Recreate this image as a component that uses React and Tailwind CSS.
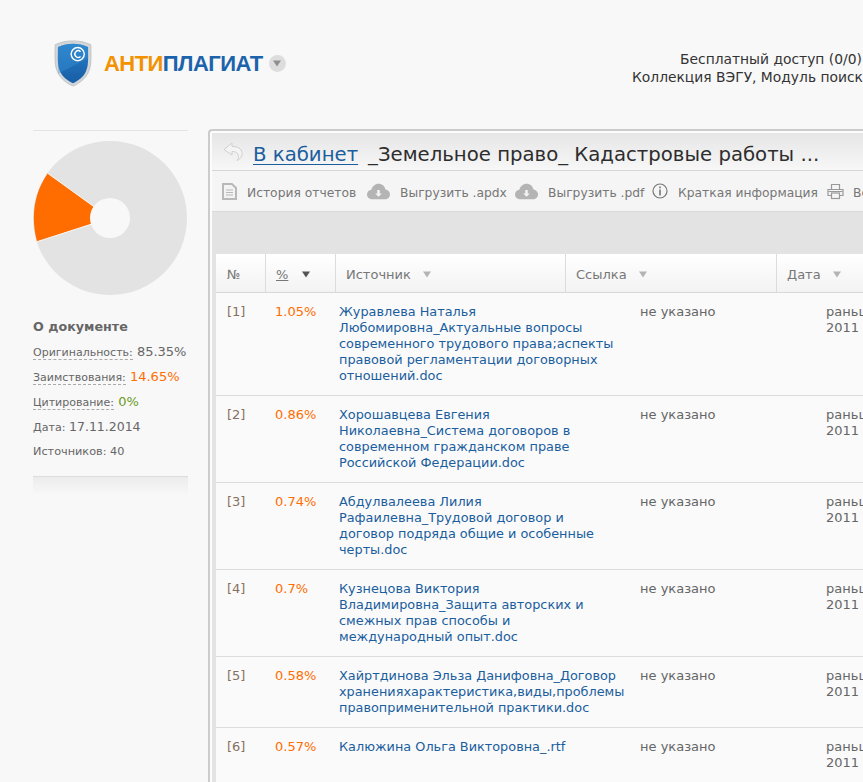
import React from "react";

function Caret({ dark, soft }) {
  return (
    <svg width="8" height="7" viewBox="0 0 8 7" className="shrink-0">
      <path d="M0 .5h8L4 6.500z" fill={dark ? "#555555" : soft ? "#8f8f8f" : "#b4b4b4"} />
    </svg>
  );
}

function Shield() {
  return (
    <svg width="38" height="47" viewBox="0 0 40 50" className="shrink-0">
      <defs>
        <linearGradient id="sh" x1="0" y1="0" x2="0" y2="1">
          <stop offset="0" stopColor="#2a80c8" />
          <stop offset="1" stopColor="#175da5" />
        </linearGradient>
      </defs>
      <path d="M1 5C8 2 13 1 20 1s12 1 19 4c0 14 1 22-3 30-3 6-9 11-16 14C13 46 7 41 4 35 0 27 1 19 1 5z" fill="#d3d6d8" stroke="#bfc3c5" strokeWidth="1" />
      <path d="M4 7.500C10 5 14 4 20 4s10 1 16 3.500c0 12 1 19-2.500 26.500C31 39.500 26 43 20 46 14 43 9 39.500 6.500 34 3 26.500 4 19.500 4 7.500z" fill="url(#sh)" />
      <path d="M36 7.500c0 5 .2 8-.2 12L4.300 36C3.800 26 4 18 4 7.500 10 5 14 4 20 4s10 1 16 3.500z" fill="#3b97dd" opacity="0.35" />
      <circle cx="25" cy="15" r="7" fill="none" stroke="#fff" strokeWidth="1.500" />
      <path d="M28 12.500a3.500 3.500 0 1 0 0 5" fill="none" stroke="#fff" strokeWidth="1.500" />
    </svg>
  );
}

function DocIcon() {
  return (
    <svg width="15" height="17" viewBox="0 0 15 17" className="shrink-0">
      <path d="M1 1h9l4 4v11H1z" fill="#f3f3f3" stroke="#b9b9b9" strokeWidth="2" />
      <path d="M4 7h7M4 9.500h7M4 12h7" stroke="#b9b9b9" strokeWidth="1" />
    </svg>
  );
}

function CloudIcon() {
  return (
    <svg width="23" height="17" viewBox="0 0 24 17" className="shrink-0">
      <path d="M6 16.500C2.500 16.500 0 14.500 0 11.500c0-2.500 2-4.500 4.500-4.800C5.500 3 8.500 .5 12 .5c3.800 0 6.500 2.500 7.300 6C22 7 24 9 24 11.500c0 3-2.500 5-5.500 5z" fill="#b4b4b4" />
      <path d="M10.700 7h2.600v3.500h2.200L12 14l-3.500-3.500h2.200z" fill="#f3f3f3" />
    </svg>
  );
}

function InfoIcon() {
  return (
    <svg width="16" height="16" viewBox="0 0 16 16" className="shrink-0">
      <circle cx="8" cy="8" r="7" fill="none" stroke="#777" strokeWidth="1.200" />
      <rect x="7.200" y="3.500" width="1.600" height="1.800" fill="#777" />
      <rect x="7.200" y="6.500" width="1.600" height="6" fill="#777" />
    </svg>
  );
}

function PrintIcon() {
  return (
    <svg width="17" height="17" viewBox="0 0 17 17" className="shrink-0">
      <path d="M4.500 6V1.500h8V6M4.500 12.500H1V6.500h15v6h-3.500" fill="none" stroke="#999" strokeWidth="1.200" />
      <rect x="4.500" y="10" width="8" height="5.500" fill="none" stroke="#999" strokeWidth="1.200" />
      <path d="M1.500 8.500h14" stroke="#999" strokeWidth="1" />
    </svg>
  );
}

function BackIcon() {
  return (
    <svg width="20" height="20" viewBox="0 0 20 20" className="shrink-0">
      <path d="M9 1L1 7.500 9 13V9.500c3.500 0 6 1 6.500 5 .2 1.500-.5 3-1.500 4 3.500-1.500 5.500-4.500 5-8-.5-4-4.500-6-10-6z" fill="#f4f4f4" stroke="#cfcfcf" strokeWidth="1" />
    </svg>
  );
}

function ToolItem({ icon, label, w }) {
  return (
    <div className={`flex items-center shrink-0 whitespace-nowrap ${w}`}>
      {icon}
      <span className="pt-[4px]">{label}</span>
    </div>
  );
}

const rows = [
  { n: 1, p: "1.05%", lines: ["Журавлева Наталья", "Любомировна_Актуальные вопросы", "современного трудового права;аспекты", "правовой регламентации договорных", "отношений.doc"] },
  { n: 2, p: "0.86%", lines: ["Хорошавцева Евгения", "Николаевна_Система договоров в", "современном гражданском праве", "Российской Федерации.doc"] },
  { n: 3, p: "0.74%", lines: ["Абдулвалеева Лилия", "Рафаилевна_Трудовой договор и", "договор подряда общие и особенные", "черты.doc"] },
  { n: 4, p: "0.7%", lines: ["Кузнецова Виктория", "Владимировна_Защита авторских и", "смежных прав способы и", "международный опыт.doc"] },
  { n: 5, p: "0.58%", lines: ["Хайртдинова Эльза Данифовна_Договор", "храненияхарактеристика,виды,проблемы", "правоприменительной практики.doc"] },
  { n: 6, p: "0.57%", lines: ["Калюжина Ольга Викторовна_.rtf"] },
];

function HeadCell({ w, label, border, caret }) {
  return (
    <div className={`${w} shrink-0 h-full flex items-center pl-[10px] ${border ? "border-r border-[#dcdcdc]" : ""}`}>
      <span className="pt-[3px]">{label}</span>
      {caret && <span className="ml-[12px] pt-[3px] flex"><Caret /></span>}
    </div>
  );
}

export default function App() {
  return (
    <div className="w-[863px] h-[782px] overflow-hidden bg-[#f8f8f8] font-['DejaVu_Sans',sans-serif] text-[13px] leading-[16px] text-[#555]">
      {/* Header */}
      <header className="h-[129px] flex items-start">
        <div className="flex items-center ml-[54px] w-[578px] mt-[40px] shrink-0">
          <Shield />
          <div className="ml-[12px] flex items-center font-['Liberation_Sans',sans-serif] font-bold text-[22px] leading-[28px] tracking-[-0.55px]">
            <span className="text-[#f39200]">АНТИ</span>
            <span className="text-[#1b64ac]">ПЛАГИАТ</span>
          </div>
          <div className="ml-[6px] w-[17px] h-[17px] rounded-full bg-[#dddddd] flex items-center justify-center">
            <Caret soft />
          </div>
        </div>
        <div className="mt-[50px] w-[231px] shrink-0 whitespace-nowrap text-[#333] text-[13.850px] leading-[18px]">
          <div className="pl-[48px]">Бесплатный доступ (0/0)</div>
          <div>Коллекция ВЭГУ, Модуль поиска</div>
        </div>
      </header>

      <div className="flex items-start">
        {/* Sidebar */}
        <aside className="ml-[33px] mt-[1px] w-[155px] shrink-0 border-t border-[#e4e4e4] pt-[9px]">
          <svg width="155" height="156" viewBox="0 0 155 156" className="block">
            <circle cx="77" cy="78" r="77" fill="#e3e3e3" />
            <path d="M14.700 33.300L61 66.700 L58 84.300 L4 101.700 C-2 78 0 55 14.700 33.300z" fill="#ff6d00" />
            <path d="M14.700 33.300L61 66.700M4 101.700L58 84.300" stroke="#fafafa" strokeWidth="1" fill="none" />
            <circle cx="77" cy="78" r="20" fill="#f8f8f8" />
          </svg>
          <div className="mt-[23px] font-bold text-[12.700px] text-[#666] leading-[16px]">О документе</div>
          <div className="mt-[9px] text-[11.100px] text-[#666] whitespace-nowrap">
            <div className="h-[25px] text-[13px]"><span className="border-b border-dashed border-[#aaa] text-[11px]">Оригинальность:</span> <span>85.35%</span></div>
            <div className="h-[25px] text-[13px]"><span className="border-b border-dashed border-[#aaa] text-[11px]">Заимствования:</span> <span className="text-[#ff6d00]">14.65%</span></div>
            <div className="h-[25px] text-[13px]"><span className="border-b border-dashed border-[#aaa] text-[11px]">Цитирование:</span> <span className="text-[#6c9a1e]">0%</span></div>
            <div className="h-[25px]">Дата: <span className="text-[12.500px]">17.11.2014</span></div>
            <div className="h-[25px] text-[11.250px]">Источников: 40</div>
          </div>
          <div className="mt-[7px] border-t border-[#dddddd] h-[19px] bg-gradient-to-b from-[#ececec] to-[#f8f8f8]" />
        </aside>

        {/* Main panel */}
        <main className="ml-[20px] w-[800px] h-[700px] shrink-0 border-t-2 border-l-2 border-[#cccccc] rounded-tl-[4px] bg-[#fcfcfc] pl-[2px] pt-[2px]">
          <div className="h-full bg-[#e3e3e3]">
            <div className="h-[38px] flex items-center pl-[11px] pt-[7px] border-b border-[#d6d6d6] bg-gradient-to-b from-[#e6e6e6] to-[#f7f7f7] whitespace-nowrap text-[19.700px] leading-[24px] text-[#2d2d2d]">
              <span className="mb-[6px] flex"><BackIcon /></span>
              <a className="ml-[10px] text-[#1b5e9e] underline underline-offset-[3px] decoration-1">В кабинет</a>
              <span className="ml-[10px]">_Земельное право_ Кадастровые работы ...</span>
            </div>
            <div className="h-[41px] flex items-center pl-[10px] border-b border-[#dadada] bg-[#f5f5f5] text-[12.300px] text-[#777] whitespace-nowrap">
              <ToolItem w="w-[145px]" icon={<span className="mr-[10px] flex"><DocIcon /></span>} label="История отчетов" />
              <ToolItem w="w-[148px]" icon={<span className="mr-[10px] flex"><CloudIcon /></span>} label="Выгрузить .apdx" />
              <ToolItem w="w-[137px]" icon={<span className="mr-[10px] flex"><CloudIcon /></span>} label="Выгрузить .pdf" />
              <ToolItem w="w-[175px]" icon={<span className="mr-[10px] flex"><InfoIcon /></span>} label="Краткая информация" />
              <ToolItem w="w-[60px]" icon={<span className="mr-[9px] flex"><PrintIcon /></span>} label="Версия" />
            </div>
            <div className="h-[42px]" />
            <div className="ml-[4px] bg-[#fafafa] h-[600px]">
              <div className="h-[39px] flex items-center border-b border-[#d8d8d8] bg-gradient-to-b from-[#ffffff] to-[#f3f3f3] text-[#777]">
                <div className="w-[50px] shrink-0 h-full flex items-center pl-[11px] border-r border-[#dcdcdc]">
                  <span className="pt-[3px]">№</span>
                </div>
                <div className="w-[70px] shrink-0 h-full flex items-center pl-[10px] border-r border-[#dcdcdc]">
                  <span className="underline pt-[3px]">%</span>
                  <span className="ml-[14px] pt-[3px] flex"><Caret dark /></span>
                </div>
                <HeadCell w="w-[230px]" label="Источник" border caret />
                <HeadCell w="w-[211px]" label="Ссылка" border caret />
                <HeadCell w="w-[90px]" label="Дата" caret />
              </div>
              {rows.map((r) => (
                <div key={r.n} className="flex items-start border-b border-[#dcdcdc] pt-[11px] pb-[11px] whitespace-nowrap">
                  <div className="w-[48px] shrink-0 pl-[11px] text-[#86705e]">[{r.n}]</div>
                  <div className="w-[75px] shrink-0 pl-[11px] text-[#ff6d00]">{r.p}</div>
                  <div className="w-[301px] shrink-0 text-[12.850px] text-[#1b5e9e]">
                    {r.lines.map((l) => <div key={l}>{l}</div>)}
                  </div>
                  <div className="w-[186px] shrink-0 text-[#666]">не указано</div>
                  <div className="shrink-0 text-[#666]"><div>раньше</div><div>2011</div></div>
                </div>
              ))}
            </div>
          </div>
        </main>
      </div>
    </div>
  );
}
